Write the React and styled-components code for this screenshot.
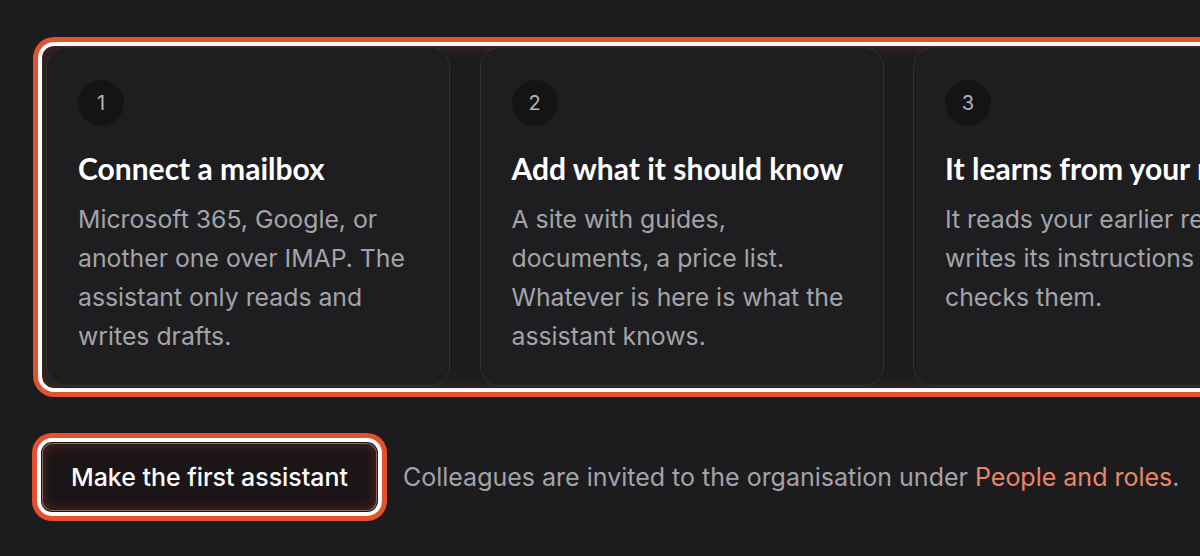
import React from "react";
import styled, { createGlobalStyle } from "styled-components";

const Global = createGlobalStyle`
  html, body { margin: 0; padding: 0; background: #1c1c1f; overflow: hidden; }
  body { font-family: Inter, "Noto Sans", sans-serif; }
  * { box-sizing: border-box; }
`;

const Page = styled.main`
  width: 1400px;
  min-height: 556px;
  padding: 46px 0 0 42px;
  display: flex;
  flex-direction: column;
  gap: 55px;
`;

const Steps = styled.ol`
  list-style: none;
  margin: 0;
  padding: 1px 4px 2px 4px;
  width: 1300px;
  display: grid;
  grid-template-columns: repeat(3, 404px);
  gap: 29.5px;
  border-radius: 12px;
  box-shadow: 0 0 0 4px #ffffff, 0 0 0 9px #e4512f,
    inset 0 0 14px rgba(228, 81, 47, 0.28);
`;

const Card = styled.li`
  height: 339px;
  min-width: 0;
  padding: 32px 31px;
  border: 1px solid #2f2f34;
  border-radius: 20px;
  background: #1e1e21;
  display: flex;
  flex-direction: column;
  align-items: flex-start;
`;

const Num = styled.span`
  flex: none;
  width: 46px;
  height: 46px;
  border-radius: 50%;
  background: #141416;
  color: #b4b4ba;
  font-size: 20px;
  line-height: 1;
  display: flex;
  align-items: center;
  justify-content: center;
  margin-bottom: 23px;
`;

const Title = styled.h3`
  margin: 0 0 13px;
  font-family: Lato, "Open Sans", sans-serif;
  font-weight: 700;
  font-size: 30px;
  line-height: 38px;
  height: 38px;
  color: #ffffff;
  white-space: nowrap;
`;

const Body = styled.p`
  margin: 0;
  font-size: 24.8px;
  line-height: 39px;
  color: #a3a3a9;
`;

const Footer = styled.div`
  display: flex;
  align-items: center;
  gap: 26px;
`;

const Button = styled.button`
  height: 68px;
  padding: 0 28px;
  border: 1px solid rgba(255, 210, 200, 0.45);
  border-radius: 10px;
  background: #1b1517;
  color: #ffffff;
  font-family: Inter, sans-serif;
  font-weight: 500;
  font-size: 24.9px;
  box-shadow: 0 0 0 1px #1c1c1f, 0 0 0 5px #ffffff, 0 0 0 10px #e4512f,
    inset 0 0 12px rgba(228, 81, 47, 0.3);
`;

const Note = styled.p`
  margin: 0;
  font-size: 25px;
  color: #a3a3a9;
  white-space: nowrap;
`;

const Link = styled.a`
  color: #ec8466;
  text-decoration: none;
`;

const steps = [
  {
    title: "Connect a mailbox",
    body: "Microsoft 365, Google, or another one over IMAP. The assistant only reads and writes drafts.",
  },
  {
    title: "Add what it should know",
    body: "A site with guides, documents, a price list. Whatever is here is what the assistant knows.",
  },
  {
    title: "It learns from your replies",
    body: "It reads your earlier replies, writes its instructions and checks them.",
  },
];

export default function App() {
  return (
    <>
      <Global />
      <Page>
        <Steps>
          {steps.map((s, i) => (
            <Card key={i}>
              <Num>{i + 1}</Num>
              <Title>{s.title}</Title>
              <Body>{s.body}</Body>
            </Card>
          ))}
        </Steps>
        <Footer>
          <Button>Make the first assistant</Button>
          <Note>
            Colleagues are invited to the organisation under{" "}
            <Link href="#">People and roles</Link>.
          </Note>
        </Footer>
      </Page>
    </>
  );
}
